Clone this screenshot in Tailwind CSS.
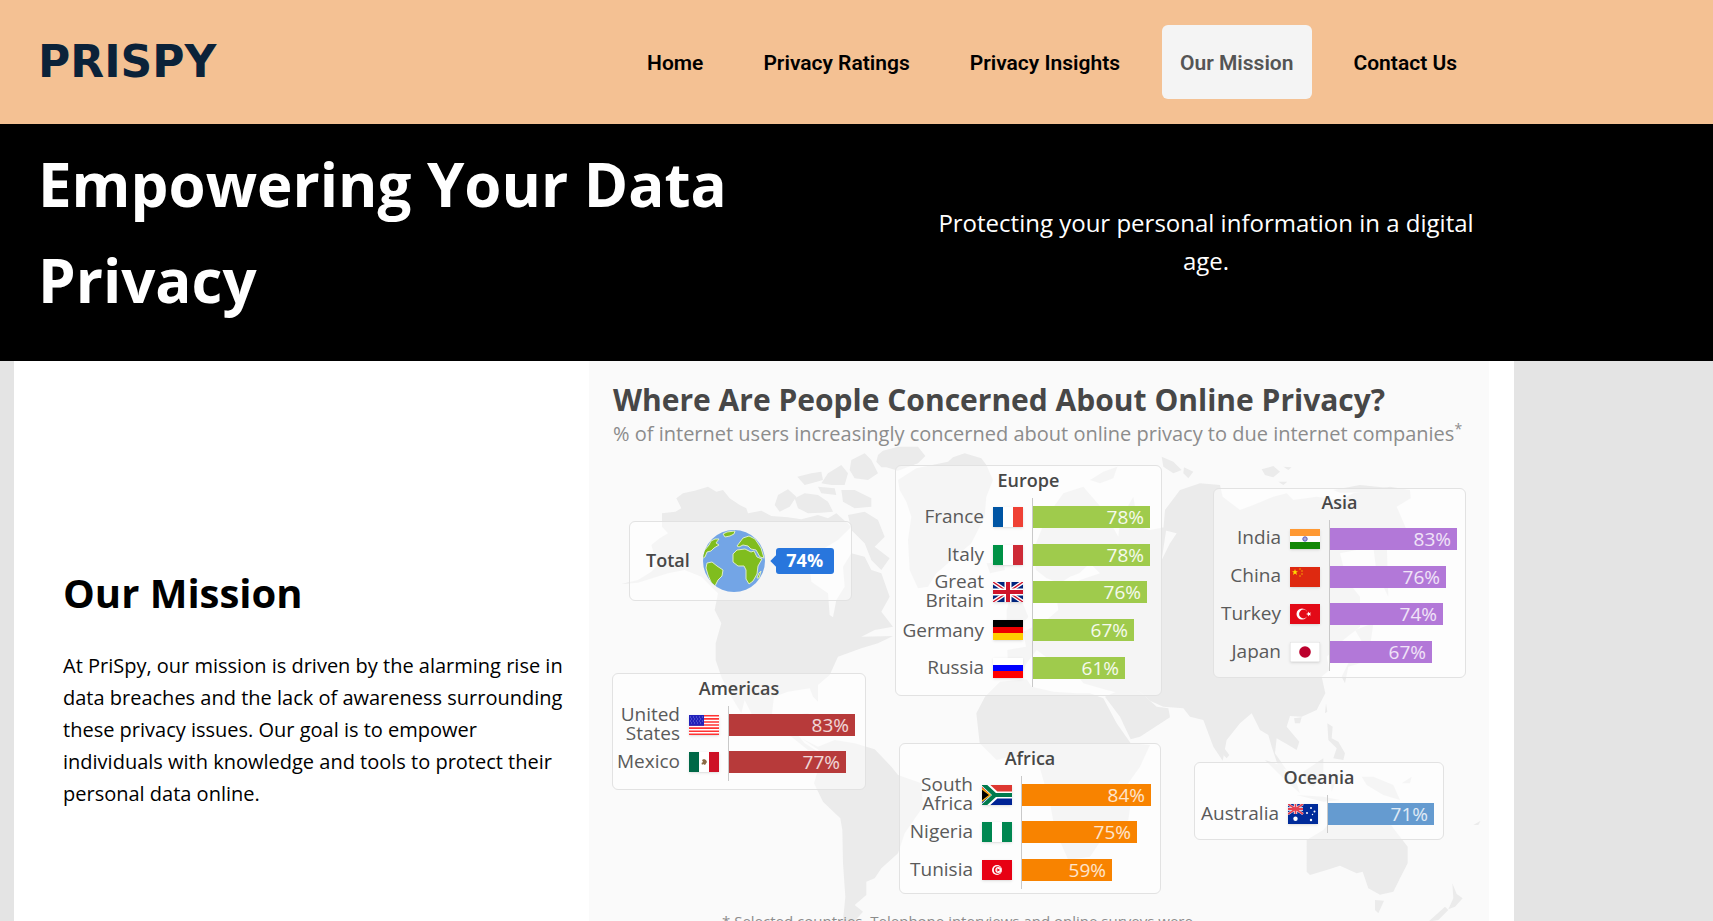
<!DOCTYPE html>
<html lang="en">
<head>
<meta charset="utf-8">
<meta name="viewport" content="width=device-width, initial-scale=1">
<title>PriSpy - Our Mission</title>
<script src="https://cdn.jsdelivr.net/npm/@tailwindcss/browser@4"></script>
</head>
<body class="bg-[#e4e4e4] font-['Open_Sans','Noto_Sans',sans-serif] text-black">

<header class="bg-[#f4c193]">
  <div class="flex max-w-[1514px] items-center justify-between py-[25px] pr-[39px] pl-[38px]">
    <a href="#" class="font-['DejaVu_Sans',sans-serif] text-[44px] leading-[60px] font-bold text-[#0b2239]">PRISPY</a>
    <nav class="flex gap-6 font-['Roboto',sans-serif] text-[21px] leading-[34px] font-semibold">
      <a href="#" class="rounded-md px-[18px] pt-[21px] pb-[19px]">Home</a>
      <a href="#" class="rounded-md px-[18px] pt-[21px] pb-[19px]">Privacy Ratings</a>
      <a href="#" class="rounded-md px-[18px] pt-[21px] pb-[19px]">Privacy Insights</a>
      <a href="#" aria-current="page" class="rounded-md bg-[#f4f4f4] px-[18px] pt-[21px] pb-[19px] text-[#555]">Our Mission</a>
      <a href="#" class="rounded-md px-[18px] pt-[21px] pb-[19px]">Contact Us</a>
    </nav>
  </div>
</header>

<section class="bg-black text-white">
  <div class="flex max-w-[1514px] items-center justify-between pt-3 pr-[38px] pb-[13px] pl-[38px]">
    <h1 class="w-1/2 pb-5 text-[60px] leading-[96px] font-bold">Empowering Your Data Privacy</h1>
    <p class="w-[540px] text-center text-2xl leading-[38px]">Protecting your personal information in a digital age.</p>
  </div>
</section>

<main class="ml-3.5 flex max-w-[1500px] items-center bg-white pr-[25px]">
  <div class="flex-1 pr-5 pl-[49px]">
    <h2 class="mb-[25px] text-[40px] leading-[64px] font-bold">Our Mission</h2>
    <p class="text-xl leading-8">At PriSpy, our mission is driven by the alarming rise in data breaches and the lack of awareness surrounding these privacy issues. Our goal is to empower individuals with knowledge and tools to protect their personal data online.</p>
  </div>

  <figure class="relative flex h-[648px] w-3/5 max-w-[900px] min-w-[900px] flex-col bg-[#fafafa] text-[#5a5a5a]">
    <!-- world map -->
    <svg class="absolute inset-0 h-full w-full" viewBox="0 0 900 648" fill="#ebebeb" aria-hidden="true">
      <g transform="translate(-1 69) scale(.33333)">
        <path d="M190 345L215 325 240 310 222 290 222 250 262 245 280 235 265 205 285 190 320 182 360 170 385 185 405 180 425 205 455 225 475 235 480 250 520 242 550 258 600 262 640 268 690 255 720 265 745 250 765 268 790 290 750 330 700 360 665 420 670 455 720 490 725 555 735 562 745 510 770 470 765 410 790 370 830 380 850 420 880 430 905 500 880 545 915 590 860 600 820 620 915 618 870 640 820 655 750 680 725 735 690 765 690 815 675 800 665 775 600 785 558 800 552 850 575 885 610 885 625 910 650 940 690 965 660 960 610 920 560 900 500 870 470 810 460 850 430 800 400 740 383 690 383 640 400 580 380 540 390 490 370 470 340 440 290 420 240 430 150 458 100 462 150 450 190 425 215 400 200 380z"/>
        <path d="M870 75L885 62 930 50 990 50 1012 78 990 100 930 122 895 112 880 112 865 95z"/>
        <path d="M985 115L1080 95 1095 82 1130 70 1180 85 1195 105 1215 150 1195 200 1190 260 1150 340 1080 400 1045 430 1020 470 990 475 965 420 960 330 970 260 955 215 935 180 930 150z"/>
        <path d="M560 225L570 195 600 178 625 200 605 230 575 245zM620 205L650 190 690 195 720 215 735 245 700 248 660 250 630 235zM628 140L670 130 700 125 705 150 670 160 650 165zM720 130L760 105 780 130 770 165 730 165 700 160zM790 90L830 70 850 90 870 130 840 150 800 145 785 120zM760 180L800 180 850 205 850 230 800 235 765 215zM780 255L830 245 870 270 890 320 860 350 905 385 880 420 850 390 830 340 790 300zM690 170L740 175 745 195 700 190z"/>
        <path d="M600 855L660 850 700 880 640 870zM715 890L750 890 755 905 720 905z"/>
        <path d="M640 925L690 950 740 930 800 940 860 958 910 1010 930 1035 1000 1060 1005 1130 950 1210 930 1270 880 1315 860 1345 835 1355 835 1395 800 1425 825 1445 800 1473 765 1473 772 1400 765 1300 763 1200 757 1165 705 1115 678 1060 690 1020 700 965z"/>
      </g>
      <g transform="translate(451 69) scale(.33333)">
        <path d="M-191 850L-165 800-120 755-40 748-25 770 40 785 110 790 150 790 190 805 230 880 272 940 330 945 300 1010 250 1080 255 1170 190 1220 150 1280 85 1290 45 1200 30 1120 10 1050-10 980-70 975-130 990-181 940z"/>
        <path d="M275 1100L265 1170 240 1190 235 1150z"/>
        <path d="M195 800L240 780 300 785 350 830 385 835 390 862 300 920 272 928 240 860z"/>
        <path d="M-95 740L-98 660-42 650-50 605 20 570 55 540 50 505 80 475 120 450 180 430 150 400 118 430 90 440 60 460 20 445-12 420-20 360 20 260 70 190 130 170 190 240 235 320 240 270 280 200 295 290 330 300 380 290 365 390 390 340 410 310 370 300 375 240 420 180 480 160 540 165 548 200 600 240 640 225 700 200 740 190 760 210 830 200 900 210 940 190 1050 170 1110 180 1112 205 1070 230 1100 300 1040 330 1045 500 1010 430 1000 350 900 370 920 450 960 500 960 590 910 630 860 680 868 720 845 740 856 790 830 840 785 860 750 858 740 890 778 935 770 960 745 945 710 925 705 970 740 1020 715 1010 695 950 685 915 660 900 635 850 600 880 560 930 548 992 520 950 490 870 450 860 430 835 370 830 330 812 300 785 240 790 200 780 130 760 100 720 60 735 30 690-10 660-40 700-60 740z"/>
        <path d="M365 80L400 95 425 120 400 130 370 110zM432 112L460 125 445 145 430 130zM665 118L700 108 720 125 700 142 675 135zM730 110L755 112 745 120zM150 150L190 125 232 110 220 145 180 160zM715 155L742 155 730 165zM880 180L960 165 1055 175 1055 185 900 188z"/>
        <path d="M-100 540L-80 470-60 500-35 560-60 590-100 590zM-160 400L-110 395-105 420-150 430z"/>
        <path d="M553 955L568 975 560 985 550 975zM762 865L785 862 780 880 765 880zM858 820L862 845 855 850zM862 880L878 890 875 925 895 935 915 970 910 990 880 985 890 955 865 930zM945 600L1000 580 990 650 960 700 925 710 915 760 905 740 930 690 975 650z"/>
        <path d="M675 990L720 1005 770 1060 780 1090 745 1060zM790 1025L850 985 850 1030 820 1070 790 1055zM870 1035L900 1030 885 1060 875 1085zM770 1095L850 1100 900 1110 850 1115zM965 1040L1000 1040 1060 1065 1080 1110 1030 1095 980 1065zM1085 1060L1115 1040 1110 1060z"/>
        <path d="M800 1230L850 1200 880 1165 930 1150 985 1150 1000 1180 1030 1150 1060 1195 1103 1250 1103 1300 1080 1345 1060 1385 1020 1394 985 1375 968 1325 950 1330 900 1307 860 1320 810 1335 800 1325z"/>
        <path d="M1005 1410L1032 1412 1015 1450 1005 1440zM1237 1360L1250 1392 1268 1405 1245 1430 1225 1438 1240 1405zM1215 1430L1225 1440 1195 1470 1165 1475zM1300 1185L1322 1172 1315 1185z"/>
      </g>
    </svg>

    <figcaption class="relative pt-[17px] pl-6">
      <h3 class="text-[30px] leading-[44px] font-bold text-[#474747]">Where Are People Concerned About Online Privacy?</h3>
      <p class="text-xl leading-6 whitespace-nowrap text-[#8c8c8c]">% of internet users increasingly concerned about online privacy to due internet companies<sup class="text-sm leading-none">*</sup></p>
    </figcaption>

    <!-- cards pinned on the map -->
    <div class="absolute top-[160px] left-[40px] flex h-20 w-[223px] items-center rounded-md border border-[#e2e2e2] bg-white/50 pl-4">
      <span class="pb-0.5 text-lg leading-6 font-semibold text-[#474747]">Total</span>
      <svg class="ml-[13px] h-[62px] w-[62px]" viewBox="0 0 62 62" aria-hidden="true">
        <defs><clipPath id="globe"><circle cx="31" cy="31" r="31"/></clipPath></defs>
        <g clip-path="url(#globe)">
          <rect width="62" height="62" fill="#73a5e6"/>
          <g fill="#80bd1e" stroke="#dcecc8" stroke-width="1">
            <path d="M-2 29L1 21 6 15 8 11 12 9 16 9 13 13 16 15 11 18 8 21 4 22 2 27z"/>
            <path d="M20 4L24 2 32 1 31 4 27 6 22 7z"/>
            <path d="M4 33L9 32 14 36 20 40 19 46 15 50 12 56 8 52 5 45 3 38z"/>
            <path d="M30 24L34 20 42 19 48 22 51 21 54 27 59 29 55 36 54 44 50 51 46 54 43 49 43 40 41 36 35 36 30 32z"/>
            <path d="M34 16L37 12 40 8 46 6 52 9 58 18 61 28 57 27 53 20 48 19 45 16 40 15 36 17z"/>
            <path d="M56 43L58 41 56 48 54 48z"/>
          </g>
        </g>
      </svg>
      <span class="relative ml-[11px] h-[26px] w-[58px] rounded-[3px] bg-[#2876dd] text-center text-lg leading-6 font-bold text-white before:absolute before:top-[9px] before:-left-1 before:size-2 before:rotate-45 before:bg-[#2876dd] before:content-['']"><span class="relative">74%</span></span>
    </div>

    <section class="absolute top-[104px] left-[306px] w-[267px] rounded-md border border-[#e2e2e2] bg-white/50 pb-2">
      <h4 class="pt-0.5 pb-1.5 text-center text-lg leading-6 font-semibold text-[#474747]">Europe</h4>
      <ul class="grid h-[189px] auto-rows-fr text-[19px] leading-[19px]">
        <li class="grid min-h-0 grid-cols-[88px_30px_1fr] items-center gap-x-[9px]"><span class="text-right">France</span>
          <svg class="h-5 w-[30px] shadow-sm" viewBox="0 0 30 20"><path fill="#fff" d="M0 0h30v20H0z"/><path fill="#0055a4" d="M0 0h10v20H0z"/><path fill="#ef4135" d="M20 0h10v20H20z"/></svg>
          <div class="flex h-full items-center border-l border-[#c9c9c9]"><span class="bg-[#9fcb4c] pr-1.5 text-right leading-[22px] text-white/90" style="width:117px">78%</span></div></li>
        <li class="grid min-h-0 grid-cols-[88px_30px_1fr] items-center gap-x-[9px]"><span class="text-right">Italy</span>
          <svg class="h-5 w-[30px] shadow-sm" viewBox="0 0 30 20"><path fill="#fff" d="M0 0h30v20H0z"/><path fill="#009246" d="M0 0h10v20H0z"/><path fill="#ce2b37" d="M20 0h10v20H20z"/></svg>
          <div class="flex h-full items-center border-l border-[#c9c9c9]"><span class="bg-[#9fcb4c] pr-1.5 text-right leading-[22px] text-white/90" style="width:117px">78%</span></div></li>
        <li class="grid min-h-0 grid-cols-[88px_30px_1fr] items-center gap-x-[9px]"><span class="-my-1 pb-0.5 text-right">Great<br>Britain</span>
          <svg class="h-5 w-[30px] shadow-sm" viewBox="0 0 30 20"><path fill="#00247d" d="M0 0h30v20H0z"/><path stroke="#fff" stroke-width="4" d="M0 0l30 20M30 0L0 20"/><path stroke="#cf142b" stroke-width="1.4" d="M0 0l30 20M30 0L0 20"/><path stroke="#fff" stroke-width="7" d="M15 0v20M0 10h30"/><path stroke="#cf142b" stroke-width="4" d="M15 0v20M0 10h30"/></svg>
          <div class="flex h-full items-center border-l border-[#c9c9c9]"><span class="bg-[#9fcb4c] pr-1.5 text-right leading-[22px] text-white/90" style="width:114px">76%</span></div></li>
        <li class="grid min-h-0 grid-cols-[88px_30px_1fr] items-center gap-x-[9px]"><span class="text-right">Germany</span>
          <svg class="h-5 w-[30px] shadow-sm" viewBox="0 0 30 20"><path d="M0 0h30v7H0z"/><path fill="#e00" d="M0 7h30v6H0z"/><path fill="#ffce00" d="M0 13h30v7H0z"/></svg>
          <div class="flex h-full items-center border-l border-[#c9c9c9]"><span class="bg-[#9fcb4c] pr-1.5 text-right leading-[22px] text-white/90" style="width:101px">67%</span></div></li>
        <li class="grid min-h-0 grid-cols-[88px_30px_1fr] items-center gap-x-[9px]"><span class="pb-0.5 text-right">Russia</span>
          <svg class="h-5 w-[30px] shadow-sm" viewBox="0 0 30 20"><path fill="#fff" d="M0 0h30v7H0z"/><path fill="#00f" d="M0 7h30v6H0z"/><path fill="#f00" d="M0 13h30v7H0z"/></svg>
          <div class="flex h-full items-center border-l border-[#c9c9c9]"><span class="bg-[#9fcb4c] pr-1.5 text-right leading-[22px] text-white/90" style="width:92px">61%</span></div></li>
      </ul>
    </section>

    <section class="absolute top-[127px] left-[624px] w-[253px] rounded-md border border-[#e2e2e2] bg-white/50 pb-1.5">
      <h4 class="pt-px pb-1.5 text-center text-lg leading-6 font-semibold text-[#474747]">Asia</h4>
      <ul class="grid h-[151px] auto-rows-fr text-[19px] leading-[19px]">
        <li class="grid min-h-0 grid-cols-[67px_30px_1fr] items-center gap-x-[9px]"><span class="pb-0.5 text-right">India</span>
          <svg class="h-5 w-[30px] shadow-sm" viewBox="0 0 30 20"><path fill="#fff" d="M0 0h30v20H0z"/><path fill="#f93" d="M0 0h30v7H0z"/><path fill="#128807" d="M0 13h30v7H0z"/><circle cx="15" cy="10" r="2.2" fill="#a9a9de" stroke="#5a5ab8"/></svg>
          <div class="flex h-full items-center border-l border-[#c9c9c9]"><span class="bg-[#b278d8] pr-1.5 text-right leading-[22px] text-white/80" style="width:127px">83%</span></div></li>
        <li class="grid min-h-0 grid-cols-[67px_30px_1fr] items-center gap-x-[9px]"><span class="pb-0.5 text-right">China</span>
          <svg class="h-5 w-[30px] shadow-sm" viewBox="0 0 30 20"><path fill="#de2910" d="M0 0h30v20H0z"/><path fill="#ffde00" d="M5 2l.8 2.2H8L6.300 5.500 7 8 5 6.500 3 8l.7-2.500L2 4.200h2.200z"/><g fill="#f5a800"><circle cx="10" cy="2" r=".8"/><circle cx="12" cy="4" r=".8"/><circle cx="12" cy="7" r=".8"/><circle cx="10" cy="9" r=".8"/></g></svg>
          <div class="flex h-full items-center border-l border-[#c9c9c9]"><span class="bg-[#b278d8] pr-1.5 text-right leading-[22px] text-white/80" style="width:116px">76%</span></div></li>
        <li class="grid min-h-0 grid-cols-[67px_30px_1fr] items-center gap-x-[9px]"><span class="pb-0.5 text-right">Turkey</span>
          <svg class="h-5 w-[30px] shadow-sm" viewBox="0 0 30 20"><path fill="#e30a17" d="M0 0h30v20H0z"/><circle cx="12" cy="10" r="5.500" fill="#fff"/><circle cx="13.500" cy="10" r="4.400" fill="#e30a17"/><path fill="#fff" d="M16 10l2-.7V7.500l1.200 1.600 2-.6L20 10l1.200 1.500-2-.6-1.200 1.600v-1.800z"/></svg>
          <div class="flex h-full items-center border-l border-[#c9c9c9]"><span class="bg-[#b278d8] pr-1.5 text-right leading-[22px] text-white/80" style="width:113px">74%</span></div></li>
        <li class="grid min-h-0 grid-cols-[67px_30px_1fr] items-center gap-x-[9px]"><span class="pb-0.5 text-right">Japan</span>
          <svg class="h-5 w-[30px] shadow-sm" viewBox="0 0 30 20"><path fill="#fff" stroke="#ddd" d="M0 0h30v20H0z"/><circle cx="15" cy="10" r="5.800" fill="#bc002d"/></svg>
          <div class="flex h-full items-center border-l border-[#c9c9c9]"><span class="bg-[#b278d8] pr-1.5 text-right leading-[22px] text-white/80" style="width:102px">67%</span></div></li>
      </ul>
    </section>

    <section class="absolute top-[312px] left-[23px] w-[254px] rounded-md border border-[#e2e2e2] bg-white/50 pb-2">
      <h4 class="pt-0.5 pb-1.5 text-center text-lg leading-6 font-semibold text-[#474747]">Americas</h4>
      <ul class="grid h-[75px] auto-rows-fr text-[19px] leading-[19px]">
        <li class="grid min-h-0 grid-cols-[67px_30px_1fr] items-center gap-x-[9px]"><span class="-my-1 pb-0.5 text-right">United<br>States</span>
          <svg class="h-5 w-[30px] shadow-sm" viewBox="0 0 30 20"><path fill="#fff" d="M0 0h30v20H0z"/><path stroke="#f33" stroke-width="1.600" d="M0 .8h30M0 3.900h30M0 7h30M0 10h30M0 13.100h30M0 16.200h30M0 19.200h30"/><path fill="#22b" d="M0 0h15v10.800H0z"/><path stroke="#77d" stroke-dasharray="1 2" d="M1 2h13M2 4h12M1 6h13M2 8h12"/></svg>
          <div class="flex h-full items-center border-l border-[#c9c9c9]"><span class="bg-[#b73a3a] pr-1.5 text-right leading-[22px] text-white/80" style="width:126px">83%</span></div></li>
        <li class="grid min-h-0 grid-cols-[67px_30px_1fr] items-center gap-x-[9px]"><span class="pb-0.5 text-right">Mexico</span>
          <svg class="h-5 w-[30px] shadow-sm" viewBox="0 0 30 20"><path fill="#fff" d="M0 0h30v20H0z"/><path fill="#006847" d="M0 0h10v20H0z"/><path fill="#ce1126" d="M20 0h10v20H20z"/><path fill="#8a6a45" d="M13 8l2-1 2 1 1 2-2 3-2-1-1 1-.5-2 1.500-1z"/></svg>
          <div class="flex h-full items-center border-l border-[#c9c9c9]"><span class="bg-[#b73a3a] pr-1.5 text-right leading-[22px] text-white/80" style="width:117px">77%</span></div></li>
      </ul>
    </section>

    <section class="absolute top-[382px] left-[310px] w-[262px] rounded-md border border-[#e2e2e2] bg-white/50 pb-1">
      <h4 class="pt-0.5 pb-1.5 text-center text-lg leading-6 font-semibold text-[#474747]">Africa</h4>
      <ul class="grid h-[113px] auto-rows-fr text-[19px] leading-[19px]">
        <li class="grid min-h-0 grid-cols-[73px_30px_1fr] items-center gap-x-[9px]"><span class="-my-1 pb-0.5 text-right">South<br>Africa</span>
          <svg class="h-5 w-[30px] shadow-sm" viewBox="0 0 30 20"><path fill="#de3831" d="M0 0h30v10H0z"/><path fill="#002395" d="M0 10h30v10H0z"/><path fill="none" stroke="#fff" stroke-width="7" d="M1-2l13 12L1 22M13 10h17"/><path fill="none" stroke="#007a4d" stroke-width="4.200" d="M0-2l13 12L0 22M13 10h17"/><path stroke="#ffb612" stroke-width="1.400" d="M-1 3l9 7-9 7z"/></svg>
          <div class="flex h-full items-center border-l border-[#c9c9c9]"><span class="bg-[#f88300] pr-1.5 text-right leading-[22px] text-white/80" style="width:129px">84%</span></div></li>
        <li class="grid min-h-0 grid-cols-[73px_30px_1fr] items-center gap-x-[9px]"><span class="pb-0.5 text-right">Nigeria</span>
          <svg class="h-5 w-[30px] shadow-sm" viewBox="0 0 30 20"><path fill="#fff" d="M0 0h30v20H0z"/><path fill="#008751" d="M0 0h10v20H0zM20 0h10v20H20z"/></svg>
          <div class="flex h-full items-center border-l border-[#c9c9c9]"><span class="bg-[#f88300] pr-1.5 text-right leading-[22px] text-white/80" style="width:115px">75%</span></div></li>
        <li class="grid min-h-0 grid-cols-[73px_30px_1fr] items-center gap-x-[9px]"><span class="pb-0.5 text-right">Tunisia</span>
          <svg class="h-5 w-[30px] shadow-sm" viewBox="0 0 30 20"><path fill="#e70013" d="M0 0h30v20H0z"/><circle cx="15" cy="10" r="5" fill="#fff"/><circle cx="15.500" cy="10" r="3.700" fill="#e70013"/><circle cx="16.300" cy="10" r="3" fill="#fff"/><path fill="#e70013" d="M14 10l1.500-.6V8l1 1.200 1.500-.5-1 1.300 1 1.300-1.500-.5-1 1.200v-1.400z"/></svg>
          <div class="flex h-full items-center border-l border-[#c9c9c9]"><span class="bg-[#f88300] pr-1.5 text-right leading-[22px] text-white/80" style="width:90px">59%</span></div></li>
      </ul>
    </section>

    <section class="absolute top-[401px] left-[605px] w-[250px] rounded-md border border-[#e2e2e2] bg-white/50 pb-1.5">
      <h4 class="pt-0.5 pb-1.5 text-center text-lg leading-6 font-semibold text-[#474747]">Oceania</h4>
      <ul class="grid h-[38px] auto-rows-fr text-[19px] leading-[19px]">
        <li class="grid min-h-0 grid-cols-[84px_30px_1fr] items-center gap-x-[9px]"><span class="pb-0.5 text-right">Australia</span>
          <svg class="h-5 w-[30px] shadow-sm" viewBox="0 0 30 20"><path fill="#002b9a" d="M0 0h30v20H0z"/><path stroke="#fff" stroke-width="2.400" d="M0 0l15 10M15 0L0 10"/><path stroke="#fff" stroke-width="3.400" d="M7.500 0v10M0 5h15"/><path stroke="#e4404f" stroke-width="1.800" d="M7.500 0v10M0 5h15M0 0l15 10M15 0L0 10"/><g fill="#fff"><circle cx="7.500" cy="14.800" r="2.200"/><circle cx="23" cy="4" r="1"/><circle cx="19" cy="9" r="1"/><circle cx="26.500" cy="7.500" r="1"/><circle cx="23" cy="16" r="1.200"/><circle cx="24.500" cy="10.500" r=".7"/></g></svg>
          <div class="flex h-full items-center border-l border-[#c9c9c9]"><span class="bg-[#659bd0] pr-1.5 text-right leading-[22px] text-white/80" style="width:106px">71%</span></div></li>
      </ul>
    </section>

    <p class="relative mt-auto pb-[78px] pl-[133px] text-[15px] leading-5 text-[#8c8c8c]">* Selected countries. Telephone interviews and online surveys were</p>
  </figure>
</main>
</body>
</html>
